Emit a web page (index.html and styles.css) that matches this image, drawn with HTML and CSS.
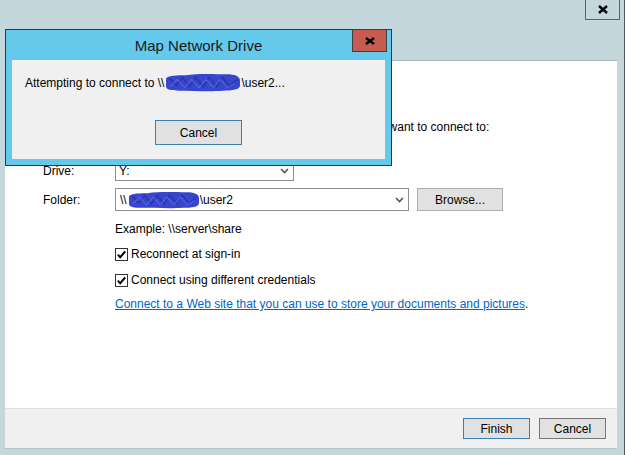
FILE: index.html
```html
<!DOCTYPE html>
<html lang="en">
<head>
  <meta charset="UTF-8">
  <title>Map Network Drive</title>
  <link rel="stylesheet" href="styles.css">
</head>
<body>

<div class="wizard">
  <div class="wizard-titlebar">
    <button class="frame-close">
      <svg width="10" height="9" viewBox="0 0 10 9"><path d="M1 1 L9 8 M9 1 L1 8" stroke="#000" stroke-width="2.4"/></svg>
    </button>
  </div>
  <div class="wizard-client">
    <div class="wizard-content">
      <p class="wizard-desc">Specify the drive letter for the connection and the folder that you want to connect to:</p>

      <div class="field-row">
        <label class="field-label">Drive:</label>
        <div class="combo combo-drive">
          <span>Y:</span>
          <svg class="chevron" width="9" height="6" viewBox="0 0 9 6"><path d="M1 1 L4.5 4.5 L8 1" stroke="#555" stroke-width="1.6" fill="none"/></svg>
        </div>
      </div>

      <div class="field-row folder-row">
        <label class="field-label">Folder:</label>
        <div class="combo combo-folder">
          <span>\\<svg class="redact" width="72" height="18" viewBox="0 0 74 18"><path d="M1 5 C4 2 12 2 20 2 C32 0 50 1 60 1 C68 1 73 3 73 7 L73 12 C73 16 66 17 56 17 C44 18 26 17 14 17 C6 17 1 16 1 13 Z" fill="#3846cc"/><path d="M4 5 L11 12 L17 4 L24 13 L30 4 L37 13 L43 4 L50 13 L56 4 L63 13 L70 6" stroke="#2a35ae" stroke-width="1.5" fill="none"/><path d="M5 13 L12 6 L19 14 L26 6 L33 14 L40 6 L47 14 L54 6 L61 14 L68 10" stroke="#5063de" stroke-width="1.1" fill="none"/></svg>\user2</span>
          <svg class="chevron" width="9" height="6" viewBox="0 0 9 6"><path d="M1 1 L4.5 4.5 L8 1" stroke="#555" stroke-width="1.6" fill="none"/></svg>
        </div>
        <button class="btn btn-browse">Browse...</button>
      </div>

      <div class="options">
        <div class="example">Example: \\server\share</div>
        <div class="check-row first">
          <svg width="13" height="13" viewBox="0 0 13 13"><rect x="0.5" y="0.5" width="12" height="12" fill="#fff" stroke="#333"/><path d="M2.8 6.6 L5.2 9.2 L10.2 3.4" stroke="#000" stroke-width="2" fill="none"/></svg>
          <span>Reconnect at sign-in</span>
        </div>
        <div class="check-row">
          <svg width="13" height="13" viewBox="0 0 13 13"><rect x="0.5" y="0.5" width="12" height="12" fill="#fff" stroke="#333"/><path d="M2.8 6.6 L5.2 9.2 L10.2 3.4" stroke="#000" stroke-width="2" fill="none"/></svg>
          <span>Connect using different credentials</span>
        </div>
        <div class="web-link"><a href="#">Connect to a Web site that you can use to store your documents and pictures</a>.</div>
      </div>
    </div>
    <div class="wizard-footer">
      <button class="btn btn-default">Finish</button>
      <button class="btn btn-dark">Cancel</button>
    </div>
  </div>
</div>

<div class="dialog">
  <div class="dialog-titlebar">
    <span class="dialog-title">Map Network Drive</span>
    <button class="dialog-close">
      <svg width="10" height="8" viewBox="0 0 10 8"><path d="M1 1 L9 7 M9 1 L1 7" stroke="#000" stroke-width="2.4"/></svg>
    </button>
  </div>
  <div class="dialog-panel">
    <p class="dialog-text">Attempting to connect to \\<svg class="redact" width="76" height="19" viewBox="0 0 74 18"><path d="M1 5 C4 2 12 2 20 2 C32 0 50 1 60 1 C68 1 73 3 73 7 L73 12 C73 16 66 17 56 17 C44 18 26 17 14 17 C6 17 1 16 1 13 Z" fill="#3846cc"/><path d="M4 5 L11 12 L17 4 L24 13 L30 4 L37 13 L43 4 L50 13 L56 4 L63 13 L70 6" stroke="#2a35ae" stroke-width="1.5" fill="none"/><path d="M5 13 L12 6 L19 14 L26 6 L33 14 L40 6 L47 14 L54 6 L61 14 L68 10" stroke="#5063de" stroke-width="1.1" fill="none"/></svg>\user2...</p>
    <div class="dialog-actions">
      <button class="btn btn-default btn-dialog">Cancel</button>
    </div>
  </div>
</div>

</body>
</html>
```

FILE: styles.css
```css
body {
  margin: 0;
  width: 625px;
  height: 455px;
  overflow: hidden;
  position: relative;
  background: #c4d7dd;
  font-family: "Liberation Sans", Arial, sans-serif;
  font-size: 12px;
  color: #000;
}

.wizard {
  width: 624px;
  height: 455px;
  border-right: 1px solid #4f5b61;
}

.wizard-titlebar {
  height: 60px;
  display: flex;
  justify-content: flex-end;
  align-items: flex-start;
}

.frame-close {
  width: 35px;
  height: 21px;
  margin-top: -1px;
  margin-right: 4px;
  padding: 0;
  border: 1px solid #59656c;
  background: #c4d7dd;
  display: flex;
  align-items: center;
  justify-content: center;
}

.wizard-client {
  margin: 0 7px 0 5px;
  border-top: 1px solid #a7b4b9;
}

.wizard-content {
  height: 347px;
  box-sizing: border-box;
  padding: 58px 0 0 38px;
  background: #fff;
}

.wizard-desc {
  margin: 0 0 25px 2px;
  line-height: 16px;
}

.field-row {
  display: flex;
  align-items: center;
}

.field-label {
  width: 72px;
}

.folder-row {
  margin-top: 7px;
}

.combo {
  box-sizing: border-box;
  display: flex;
  align-items: center;
  justify-content: space-between;
  border: 1px solid #8f8f8f;
  background: #fff;
  padding: 0 4px 0 3px;
}

.combo-drive {
  width: 179px;
  height: 21px;
}

.combo-folder {
  width: 294px;
  height: 23px;
  padding-left: 4px;
}

.redact {
  vertical-align: -5px;
  margin-left: 1px;
}

.btn {
  box-sizing: border-box;
  height: 21px;
  min-width: 67px;
  padding: 0;
  border: 1px solid #adadad;
  background: #e1e1e1;
  font-family: inherit;
  font-size: 12px;
  color: #000;
}

.btn-default {
  border-color: #3c7fb1;
}

.btn-dark {
  border-color: #767676;
}

.btn-browse {
  width: 86px;
  height: 23px;
  margin-left: 8px;
}

.options {
  margin-left: 72px;
  line-height: 16px;
}

.example {
  margin-top: 10px;
}

.check-row {
  display: flex;
  align-items: center;
  gap: 3px;
  height: 16px;
  margin-top: 10px;
}

.check-row.first {
  margin-top: 9px;
}

.web-link {
  margin-top: 8px;
}

.web-link a {
  color: #0066cc;
}

.wizard-footer {
  height: 39px;
  display: flex;
  justify-content: flex-end;
  align-items: center;
  gap: 9px;
  padding-right: 11px;
  background: #f0f0f0;
  border-top: 1px solid #dfdfdf;
  border-bottom: 1px solid #b5c1c5;
}

.dialog {
  position: absolute;
  left: 5px;
  top: 29px;
  width: 385px;
  height: 135px;
  border: 1px solid #2c3a42;
  background: #64c9eb;
}

.dialog-titlebar {
  position: relative;
  height: 30px;
  display: flex;
  justify-content: center;
  align-items: center;
}

.dialog-title {
  font-size: 15px;
  color: #1a1a1a;
}

.dialog-close {
  position: absolute;
  top: -1px;
  right: 4px;
  width: 35px;
  height: 23px;
  padding: 0;
  border: 1px solid #3e3e3e;
  background: #c75b4f;
  display: flex;
  align-items: center;
  justify-content: center;
}

.dialog-panel {
  margin: 0 6px;
  height: 99px;
  box-sizing: border-box;
  padding: 13px 0 0 13px;
  background: #f0f0f0;
}

.dialog-text {
  margin: 0;
  line-height: 16px;
}

.dialog-actions {
  display: flex;
  justify-content: center;
  margin: 28px 0 0 -13px;
}

.btn-dialog {
  width: 87px;
  height: 25px;
}
```
